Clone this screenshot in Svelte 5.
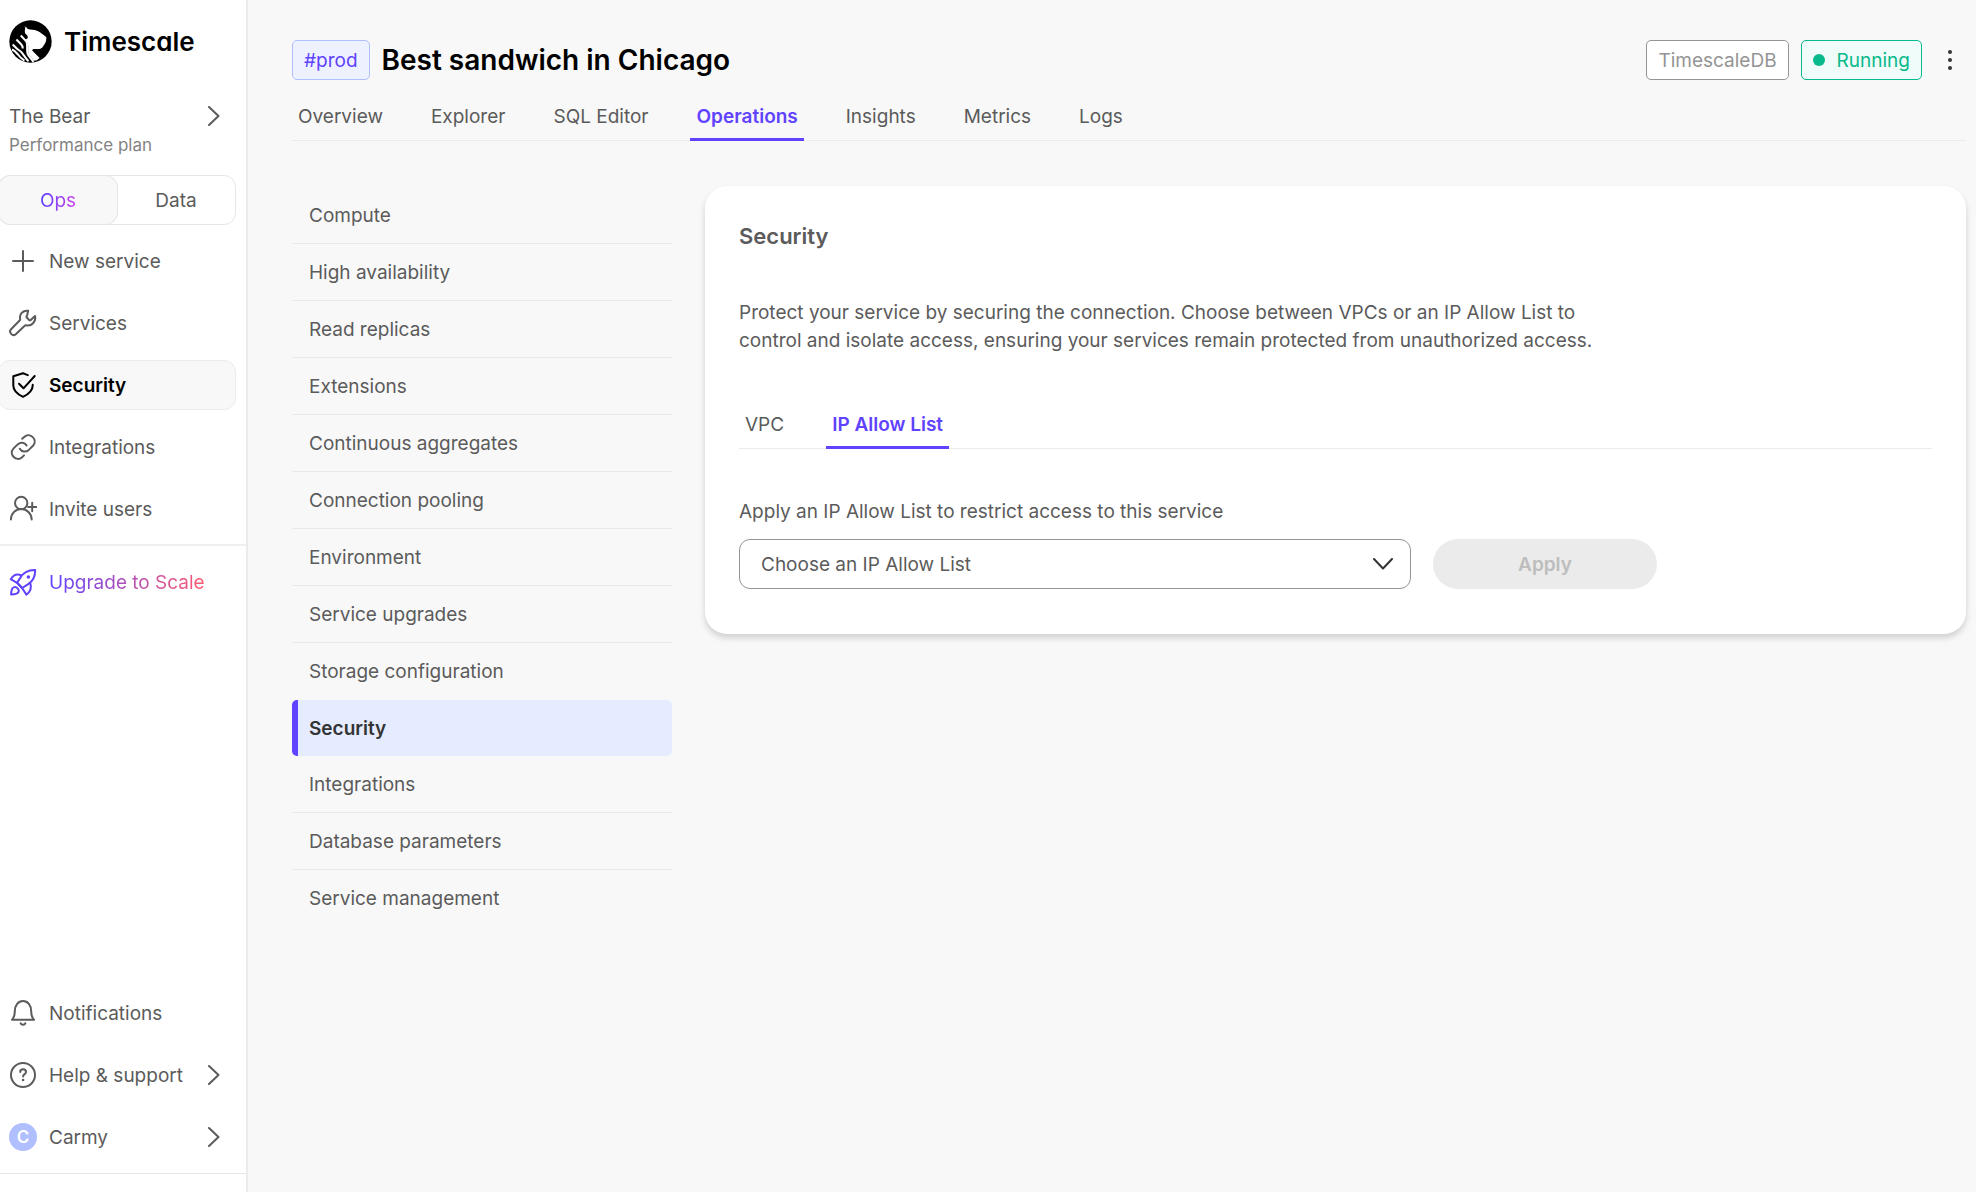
<script>
	const mainNav = [
		{ label: 'New service', icon: 'plus' },
		{ label: 'Services', icon: 'wrench' },
		{ label: 'Security', icon: 'shield' },
		{ label: 'Integrations', icon: 'link' },
		{ label: 'Invite users', icon: 'invite' }
	];

	const footerNav = [
		{ label: 'Notifications', icon: 'bell' },
		{ label: 'Help & support', icon: 'help', more: true },
		{ label: 'Carmy', avatar: 'C', more: true }
	];

	const serviceTabs = [
		'Overview',
		'Explorer',
		'SQL Editor',
		'Operations',
		'Insights',
		'Metrics',
		'Logs'
	];

	const sections = [
		'Compute',
		'High availability',
		'Read replicas',
		'Extensions',
		'Continuous aggregates',
		'Connection pooling',
		'Environment',
		'Service upgrades',
		'Storage configuration',
		'Security',
		'Integrations',
		'Database parameters',
		'Service management'
	];

	let mode = $state('Ops');
	let page = $state('Security');
	let tab = $state('Operations');
	let section = $state('Security');
	let securityTab = $state('IP Allow List');
	let allowList = $state('');

	function open(event, set) {
		event.preventDefault();
		set();
	}
</script>

{#snippet icon(name)}
	<svg class="icon" viewBox="0 0 28 28" aria-hidden="true">
		{#if name === 'plus'}
			<path d="M14 4v20M4 14h20" />
		{:else if name === 'wrench'}
			<path
				d="M19.2 1.8c-5.2-.8-9.2 3.2-8 8.1.1.6 0 1-.4 1.4l-8.7 8.9c-2.8 3 1.4 7.8 4.7 5l8.9-8.4c.5-.5.9-.6 1.5-.5 5.2 1.2 10.3-3.6 8.8-9.4l-4 3.8c-.6.6-1.5.6-2.1 0l-1.9-1.9c-.6-.6-.6-1.5 0-2.1z"
			/>
		{:else if name === 'shield'}
			<path d="M18.8 4.1 14 2.3 4.3 5.2v9.3c0 5 4.6 8.9 9.7 11.3 5.1-2.4 9.7-6.3 9.7-11.3v-.8" />
			<path d="m10 12.700 4.500 4.600L25.700 5" />
		{:else if name === 'link'}
			<path d="M13.2 5.800l2-1.900c5.600-5.200 14.200 2.900 8.800 8.900l-4.200 4.100c-3 2.800-7.200 2-9-1.200" />
			<path d="M15 22.400l-1.900 1.900c-5.600 5-13.800-2.900-8.700-8.700l4.300-4.200c3-2.800 7-2 8.900 1" />
		{:else if name === 'invite'}
			<circle cx="12.200" cy="8" r="6.200" />
			<path
				d="M1.900 24.600c0-5.800 4.400-10.500 10.300-10.500 6 0 10.500 4.700 10.500 10.500M23.200 7.800v8.400M19.200 12h8.400"
			/>
		{:else if name === 'rocket'}
			<path
				d="M26.200 1.900c-6-.2-11.200 1.700-14.500 7.200l-3.600 5.700 5 5.200 5.800-3.700c5.400-3.400 7.400-8.300 7.300-14.400z"
			/>
			<path
				d="M12.300 7.200C7.500 5.300 4 7.500 1.700 11.200l6.400 3.600 5 5.200 4.300 6.600c3.900-2.800 5.500-6.800 3.800-11.700"
			/>
			<path
				d="M8.700 20.400c-2.200-2.300-5-1.400-5.800 1-.6 1.700-.8 3.300-.8 5 1.900 0 3.700-.1 5.400-.8 2.300-.9 3.200-3.300 1.200-5.200z"
			/>
			<circle class="solid" cx="19.400" cy="9" r="1.800" />
		{:else if name === 'bell'}
			<path
				d="M3 20.700c1.700-1.700 2.800-4.600 2.800-8.300C5.800 6.200 9.300 2 14 2s8.200 4.200 8.200 10.400c0 3.700 1.100 6.600 2.800 8.300z"
			/>
			<path d="M11.700 24.300c.7 1.800 3.900 1.800 4.600 0" />
		{:else if name === 'help'}
			<circle cx="14" cy="14" r="12" />
			<path d="M11.200 11c0-3.700 5.800-3.600 5.800-.1 0 2.200-2.900 2.300-2.900 4.600" />
			<circle class="solid" cx="14.100" cy="19" r="1.300" />
		{/if}
	</svg>
{/snippet}

{#snippet chevron()}
	<svg class="chevron" viewBox="0 0 12 20" aria-hidden="true">
		<path d="m1 1 9.500 9L1 19" />
	</svg>
{/snippet}

<div class="app">
	<aside class="sidebar">
		<a class="brand" href="/">
			<svg class="logo" viewBox="0 0 128 128" aria-hidden="true">
				<circle cx="64" cy="64" r="63" />
				<path
					class="cut"
					d="M45 19c3-2 6 1 9 6 5 4 13 3 23 5 8 3 15 5 21 11l12 9c2 3 1 8 0 13-3 7-6 13-11 19-5 5-12 5-23 4-5 0-7 2-7 5l22 22-8 7-9 1-11-13c-5-5-6-8-6-14V77c0-7-2-11-7-16l-3-3c5-1 9-3 9-7 0-3-3-6-6-9-3-4-4-8-1-23z"
				/>
				<path
					class="stripe"
					d="M35 46l13 14c5 5 6 8 6 14v18c0 7 1 10 5 15l14 18M22 58l14 14c5 5 5 8 5 13M11 73l12 12c5 5 10 6 15 12 5 6 12 18 20 26M9 88c6 2 12 8 17 14 5 7 12 14 20 19"
				/>
			</svg>
			<span>Timescale</span>
		</a>

		<button class="project">
			<span class="project-text">
				<span class="project-name">The Bear</span>
				<span class="project-plan">Performance plan</span>
			</span>
			{@render chevron()}
		</button>

		<div class="mode">
			{#each ['Ops', 'Data'] as name}
				<button class:active={mode === name} onclick={() => (mode = name)}>
					<span>{name}</span>
				</button>
			{/each}
		</div>

		<nav class="nav">
			{#each mainNav as item}
				<a
					href="#{item.icon}"
					class="nav-item"
					class:active={page === item.label}
					onclick={(e) => open(e, () => (page = item.label))}
				>
					{@render icon(item.icon)}
					<span>{item.label}</span>
				</a>
			{/each}
		</nav>

		<div class="upgrade">
			<a href="#upgrade" class="nav-item">
				{@render icon('rocket')}
				<span class="gradient">Upgrade to Scale</span>
			</a>
		</div>

		<nav class="nav footer">
			{#each footerNav as item}
				<a href="#{item.icon ?? 'account'}" class="nav-item">
					{#if item.avatar}
						<span class="avatar">{item.avatar}</span>
					{:else}
						{@render icon(item.icon)}
					{/if}
					<span class="grow">{item.label}</span>
					{#if item.more}
						{@render chevron()}
					{/if}
				</a>
			{/each}
		</nav>
	</aside>

	<main>
		<header>
			<span class="badge env">#prod</span>
			<h1>Best sandwich in Chicago</h1>
			<span class="badge kind">TimescaleDB</span>
			<span class="badge status"><i></i>Running</span>
			<button class="menu" aria-label="More actions">
				<svg viewBox="0 0 8 24" aria-hidden="true">
					<circle cx="4" cy="4" r="2" />
					<circle cx="4" cy="12" r="2" />
					<circle cx="4" cy="20" r="2" />
				</svg>
			</button>
		</header>

		<nav class="tabs">
			{#each serviceTabs as name}
				<a
					href="#{name}"
					class:active={tab === name}
					onclick={(e) => open(e, () => (tab = name))}>{name}</a
				>
			{/each}
		</nav>

		<div class="content">
			<ul class="sections">
				{#each sections as name}
					<li class:active={section === name}>
						<a href="#{name}" onclick={(e) => open(e, () => (section = name))}>{name}</a>
					</li>
				{/each}
			</ul>

			<section class="card">
				<h2>Security</h2>
				<p>
					Protect your service by securing the connection. Choose between VPCs or an IP Allow List to
					control and isolate access, ensuring your services remain protected from unauthorized
					access.
				</p>

				<nav class="tabs">
					{#each ['VPC', 'IP Allow List'] as name}
						<a
							href="#{name}"
							class:active={securityTab === name}
							onclick={(e) => open(e, () => (securityTab = name))}>{name}</a
						>
					{/each}
				</nav>

				<label for="allow-list">Apply an IP Allow List to restrict access to this service</label>
				<div class="form-row">
					<div class="select">
						<select id="allow-list" bind:value={allowList}>
							<option value="">Choose an IP Allow List</option>
						</select>
						<svg viewBox="0 0 20 12" aria-hidden="true">
							<path d="m1 1 9 9.500L19 1" />
						</svg>
					</div>
					<button class="apply" disabled={!allowList}>Apply</button>
				</div>
			</section>
		</div>
	</main>
</div>

<style>
	:global(body) {
		background: #f8f8f8;
	}

	.app {
		display: flex;
		min-height: 100vh;
		font-family: Inter, 'Liberation Sans', sans-serif;
		font-size: 19px;
		line-height: 29px;
		color: #5b5b5b;
	}

	.app :global(*) {
		box-sizing: border-box;
	}

	a {
		color: inherit;
		text-decoration: none;
	}

	button,
	select {
		font: inherit;
		color: inherit;
		background: none;
		border: none;
		margin: 0;
		padding: 0;
		cursor: pointer;
	}

	svg {
		fill: none;
		stroke: currentColor;
		stroke-width: 2;
		stroke-linecap: round;
		stroke-linejoin: round;
		flex: none;
	}

	.solid {
		fill: currentColor;
		stroke: none;
	}

	/* sidebar */
	.sidebar {
		display: flex;
		flex-direction: column;
		flex: none;
		width: 248px;
		background: #fff;
		border-right: 2px solid #ebebeb;
	}

	.brand {
		display: flex;
		align-items: center;
		gap: 12px;
		padding: 20px 9px 0;
		font-size: 26px;
		font-weight: 600;
		font-feature-settings: 'cv11';
		color: #000;
	}

	.logo {
		width: 43px;
		height: 43px;
		stroke: none;
	}

	.logo circle {
		fill: #000;
	}

	.logo .cut {
		fill: #fff;
	}

	.logo .stripe {
		stroke: #fff;
		stroke-width: 6;
		stroke-linecap: butt;
	}

	.project {
		display: flex;
		justify-content: space-between;
		padding: 39px 26px 15px 9px;
		text-align: left;
	}

	.project-text {
		display: flex;
		flex-direction: column;
	}

	.project .chevron {
		margin-top: 4px;
	}

	.project-plan {
		font-size: 17px;
		color: #838383;
	}

	.chevron {
		width: 12px;
		height: 20px;
	}

	.mode {
		display: grid;
		grid-template-columns: 1fr 1fr;
		margin: 0 10px 0 -2px;
		border: 1px solid #e6e6e6;
		border-radius: 12px;
	}

	.mode button {
		height: 48px;
		border-radius: 12px;
	}

	.mode .active {
		background: #f8f8f8;
		box-shadow: 0 0 0 1px #e6e6e6;
	}

	.mode .active span,
	.gradient {
		background: linear-gradient(90deg, #5f43ff, #c840e9);
		background-clip: text;
		color: transparent;
	}

	.nav {
		display: flex;
		flex-direction: column;
		gap: 12px;
		padding: 11px 0 10px;
	}

	.nav-item {
		display: flex;
		align-items: center;
		gap: 12px;
		height: 50px;
		margin: 0 10px 0 -2px;
		padding: 0 15px 0 10px;
		border: 1px solid transparent;
		border-radius: 12px;
	}

	.nav-item.active {
		background: #f8f8f8;
		border-color: #ebebeb;
		color: #000;
		font-weight: 600;
	}

	.icon {
		width: 28px;
		height: 28px;
	}

	.upgrade {
		padding-top: 11px;
		border-top: 2px solid #efefef;
		color: #5f43ff;
	}

	.gradient {
		background-image: linear-gradient(90deg, #5f43ff, #ff5b70);
	}

	.footer {
		margin-top: auto;
		margin-bottom: 18px;
		padding-bottom: 11px;
		border-bottom: 1px solid #e6e6e6;
	}

	.grow {
		flex: 1;
	}

	.avatar {
		width: 28px;
		height: 28px;
		border-radius: 50%;
		background: #b0bfff;
		color: #fff;
		font-size: 17px;
		font-weight: 600;
		line-height: 28px;
		text-align: center;
	}

	/* service page */
	main {
		flex: 1;
		min-width: 0;
		padding: 40px 10px 40px 44px;
	}

	header {
		display: flex;
		align-items: center;
		gap: 12px;
	}

	h1 {
		flex: 1;
		margin: 0;
		font-size: 28px;
		font-weight: 600;
		color: #000;
	}

	.badge {
		display: flex;
		align-items: center;
		height: 40px;
		padding: 0 11px;
		border: 1px solid currentColor;
		border-radius: 5px;
	}

	.env {
		color: #5f43ff;
		background: #eef1ff;
		border-color: #b0bfff;
	}

	.kind {
		color: #949494;
		background: #fff;
	}

	.status {
		gap: 12px;
		color: #08b98b;
		background: #effcf9;
	}

	.status i {
		width: 12px;
		height: 12px;
		border-radius: 50%;
		background: currentColor;
	}

	.menu {
		display: flex;
		justify-content: center;
		width: 32px;
	}

	.menu svg {
		width: 8px;
		height: 24px;
		fill: #333;
		stroke: none;
	}

	.tabs {
		display: flex;
		gap: 36px;
		box-shadow: inset 0 -1px #ebebeb;
	}

	.tabs a {
		padding: 0 6px 7px;
		border-bottom: 3px solid transparent;
	}

	.tabs .active {
		color: #5f43ff;
		border-color: #5f43ff;
		font-weight: 600;
	}

	main > .tabs {
		margin-top: 22px;
	}

	.content {
		display: flex;
		align-items: flex-start;
		gap: 33px;
		margin-top: 45px;
	}

	.sections {
		flex: none;
		width: 380px;
		margin: 0;
		padding: 1px 0 0;
		list-style: none;
	}

	.sections a {
		display: block;
		padding: 14px 17px 13px;
		border-bottom: 1px solid #e9e9e9;
	}

	.sections li:last-child a,
	.sections li:has(+ .active) a {
		border-color: transparent;
	}

	.sections .active a {
		padding-left: 11px;
		border-bottom: none;
		border-left: 6px solid #5f43ff;
		border-radius: 5px;
		background: #e6ecff;
		color: #333;
		font-weight: 600;
	}

	.card {
		flex: 1;
		min-width: 0;
		padding: 36px 34px 45px;
		border-radius: 22px;
		background: #fff;
		box-shadow: 0 4px 6px rgba(0, 0, 0, 0.16);
	}

	h2 {
		margin: 0;
		font-size: 22px;
		font-weight: 600;
	}

	p {
		max-width: 880px;
		margin: 48px 0 55px;
		line-height: 28px;
	}

	label {
		display: block;
		margin: 48px 0 13px;
	}

	.form-row {
		display: grid;
		grid-template-columns: 3fr 1fr;
		gap: 22px;
		max-width: 918px;
	}

	.select {
		position: relative;
	}

	.select select {
		width: 100%;
		height: 50px;
		padding: 0 56px 0 21px;
		border: 1px solid #949494;
		border-radius: 11px;
		appearance: none;
	}

	.select svg {
		position: absolute;
		top: 19px;
		right: 18px;
		width: 20px;
		height: 12px;
		color: #333;
		pointer-events: none;
	}

	.apply {
		height: 50px;
		border-radius: 25px;
		background: #ebebeb;
		color: #bdbdbd;
		font-weight: 600;
		cursor: default;
	}
</style>
